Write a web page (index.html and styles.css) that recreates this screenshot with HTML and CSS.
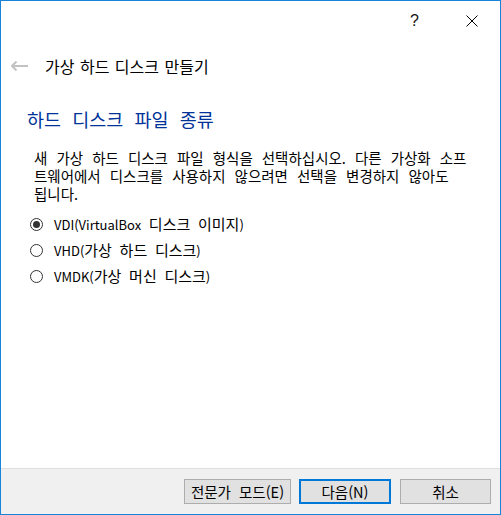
FILE: index.html
```html
<!DOCTYPE html>
<html lang="ko">
<head>
<meta charset="utf-8">
<title>가상 하드 디스크 만들기</title>
<link rel="stylesheet" href="styles.css">
</head>
<body>
<div class="window">
  <div class="titlebar">
    <div class="tb-btn help">?</div>
    <div class="tb-btn close">
      <svg width="12" height="12" viewBox="0 0 12 12"><path d="M0.5 0.5 L11.5 11.5 M11.5 0.5 L0.5 11.5" stroke="#000" stroke-width="1" fill="none"/></svg>
    </div>
  </div>
  <div class="header">
    <svg class="back" width="17" height="10" viewBox="0 0 17 10"><path d="M1 5 H17 M5.5 0.5 L1 5 L5.5 9.5" stroke="#c2c2c2" stroke-width="2" fill="none"/></svg>
    <span class="title">가상 하드 디스크 만들기</span>
  </div>
  <div class="main">
    <div class="heading">하드 디스크 파일 종류</div>
    <p class="desc">새 가상 하드 디스크 파일 형식을 선택하십시오. 다른 가상화 소프<br>트웨어에서 디스크를 사용하지 않으려면 선택을 변경하지 않아도<br>됩니다.</p>
    <div class="options">
      <div class="option"><span class="radio checked"></span><span class="label"><span class="latin">VDI(VirtualBox</span> 디스크 이미지<span class="latin">)</span></span></div>
      <div class="option"><span class="radio"></span><span class="label"><span class="latin">VHD(</span>가상 하드 디스크<span class="latin">)</span></span></div>
      <div class="option"><span class="radio"></span><span class="label"><span class="latin">VMDK(</span>가상 머신 디스크<span class="latin">)</span></span></div>
    </div>
  </div>
  <div class="footer">
    <button class="btn expert">전문가 모드(E)</button>
    <button class="btn next">다음(N)</button>
    <button class="btn cancel">취소</button>
  </div>
</div>
</body>
</html>
```

FILE: styles.css
```css
html, body {
  margin: 0;
  padding: 0;
  background: #ffffff;
}
body {
  font-family: "Noto Sans CJK KR", "Noto Sans", sans-serif;
  color: #000;
}
.window {
  width: 501px;
  height: 515px;
  box-sizing: border-box;
  border: 1px solid #1883d7;
  display: flex;
  flex-direction: column;
  background: #fff;
}
.titlebar {
  height: 40px;
  display: flex;
  justify-content: flex-end;
  flex: none;
}
.tb-btn {
  width: 57px;
  height: 40px;
  display: flex;
  align-items: center;
  justify-content: center;
  font-family: "Liberation Sans", sans-serif;
  font-size: 16px;
  color: #111;
}
.close svg { display: block; }
.header {
  height: 50px;
  display: flex;
  align-items: center;
  flex: none;
}
.back {
  margin-left: 10px;
  margin-right: 17px;
  display: block;
}
.title {
  font-size: 16px;
  word-spacing: 1px;
  line-height: 20px;
}
.main {
  flex: 1;
  padding: 13px 0 0 0;
}
.heading {
  margin-left: 26px;
  font-size: 18.5px;
  word-spacing: 6px;
  line-height: 30px;
  color: #003399;
}
.desc {
  margin: 15px 20px 0 33px;
  font-size: 14.5px;
  line-height: 18px;
  word-spacing: 5px;
  white-space: nowrap;
}
.options {
  margin-top: 8px;
  margin-left: 29px;
}
.option {
  height: 26px;
  display: flex;
  align-items: center;
}
.radio {
  width: 13px;
  height: 13px;
  box-sizing: border-box;
  border: 1px solid #333;
  border-radius: 50%;
  display: flex;
  align-items: center;
  justify-content: center;
  background: #fff;
}
.radio.checked::after {
  content: "";
  width: 7px;
  height: 7px;
  border-radius: 50%;
  background: #333;
}
.label {
  margin-left: 11px;
  font-size: 15px;
  line-height: 18px;
  word-spacing: 3.5px;
}
.latin {
  font-size: 13px;
  word-spacing: 0;
}
.footer {
  flex: none;
  height: 46px;
  border-top: 1px solid #dfdfdf;
  background: #f0f0f0;
  display: flex;
  justify-content: flex-end;
  align-items: flex-start;
  padding: 10px 9px 0 0;
  box-sizing: border-box;
}
.btn {
  height: 25px;
  box-sizing: border-box;
  border: 1px solid #adadad;
  background: #e1e1e1;
  font-family: "Noto Sans CJK KR", sans-serif;
  font-size: 14.5px;
  color: #000;
  padding: 0;
  margin: 0;
  line-height: 20px;
  word-spacing: 4px;
}
.expert { width: 107px; }
.next {
  width: 92px;
  margin-left: 8px;
  border: 2px solid #0078d7;
}
.cancel {
  width: 91px;
  margin-left: 9px;
}
```
